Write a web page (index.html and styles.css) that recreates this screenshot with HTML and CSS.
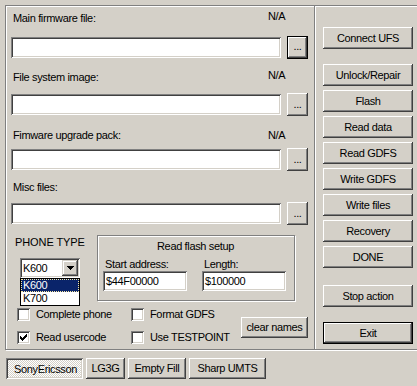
FILE: index.html
```html
<!DOCTYPE html>
<html>
<head>
<meta charset="utf-8">
<title>UFS</title>
<link rel="stylesheet" href="styles.css">
</head>
<body>
<div class="app">
  <div class="frame">
    <div class="left">
      <div class="lbl-row r1"><span class="lbl">Main firmware file:</span><span class="na up">N/A</span></div>
      <div class="in-row m1"><div class="edit path"></div><div class="btn dots default">...</div></div>

      <div class="lbl-row r2"><span class="lbl">File system image:</span><span class="na up">N/A</span></div>
      <div class="in-row m2"><div class="edit path"></div><div class="btn dots">...</div></div>

      <div class="lbl-row r3"><span class="lbl">Fimware upgrade pack:</span><span class="na">N/A</span></div>
      <div class="in-row m3"><div class="edit path"></div><div class="btn dots">...</div></div>

      <div class="lbl-row r4"><span class="lbl">Misc files:</span></div>
      <div class="in-row m4"><div class="edit path"></div><div class="btn dots">...</div></div>

      <div class="lower">
        <div class="phone">
          <div class="phone-title">PHONE TYPE</div>
          <div class="combo">
            <span class="combo-text">K600</span>
            <span class="combo-btn">
              <svg width="7" height="4" viewBox="0 0 7 4" shape-rendering="crispEdges"><rect x="0" y="0" width="7" height="1"/><rect x="1" y="1" width="5" height="1"/><rect x="2" y="2" width="3" height="1"/><rect x="3" y="3" width="1" height="1"/></svg>
            </span>
            <div class="droplist">
              <div class="item sel">K600</div>
              <div class="item">K700</div>
            </div>
          </div>
        </div>
        <div class="flashbox">
          <div class="flash-title">Read flash setup</div>
          <div class="flash-fields">
            <div class="field"><div class="field-lbl">Start address:</div><div class="edit small">$44F00000</div></div>
            <div class="field"><div class="field-lbl">Length:</div><div class="edit small">$100000</div></div>
          </div>
        </div>
      </div>

      <div class="options">
        <div class="checks">
          <div class="chk"><span class="box"></span><span>Complete phone</span></div>
          <div class="chk"><span class="box"></span><span>Format GDFS</span></div>
          <div class="chk"><span class="box"><svg width="13" height="13" viewBox="0 0 13 13" shape-rendering="crispEdges"><rect x="3" y="5" width="1" height="3"/><rect x="4" y="6" width="1" height="3"/><rect x="5" y="7" width="1" height="3"/><rect x="6" y="6" width="1" height="3"/><rect x="7" y="5" width="1" height="3"/><rect x="8" y="4" width="1" height="3"/><rect x="9" y="3" width="1" height="3"/></svg></span><span>Read usercode</span></div>
          <div class="chk"><span class="box"></span><span>Use TESTPOINT</span></div>
        </div>
        <div class="btn clear">clear names</div>
      </div>
    </div>

    <div class="right">
      <div class="btn rbtn">Connect UFS</div>
      <div class="rgroup">
        <div class="btn rbtn">Unlock/Repair</div>
        <div class="btn rbtn">Flash</div>
        <div class="btn rbtn">Read data</div>
        <div class="btn rbtn">Read GDFS</div>
        <div class="btn rbtn">Write GDFS</div>
        <div class="btn rbtn">Write files</div>
        <div class="btn rbtn">Recovery</div>
        <div class="btn rbtn">DONE</div>
      </div>
      <div class="btn rbtn stop">Stop action</div>
      <div class="btn rbtn default exit">Exit</div>
    </div>
  </div>

  <div class="tabs">
    <div class="btn tab down t-se">SonyEricsson</div>
    <div class="btn tab t-lg">LG3G</div>
    <div class="btn tab t-ef">Empty Fill</div>
    <div class="btn tab t-sh">Sharp UMTS</div>
  </div>
</div>
</body>
</html>
```

FILE: styles.css
```css
* { box-sizing: border-box; }
html, body { margin: 0; padding: 0; }
body {
  background: #d4d0c8;
  font-family: "Liberation Sans", Arial, sans-serif;
  font-size: 11px;
  line-height: 13px;
  letter-spacing: -0.35px;
  color: #000;
  width: 417px;
  height: 386px;
  overflow: hidden;
}
.app { padding: 5px 0 0 5px; }

/* etched frame */
.frame {
  display: flex;
  width: 420px;
  height: 345px;
  border: 1px solid #808080;
  border-right: none;
  box-shadow: inset 1px 1px #fff, 1px 1px #fff;
}
.left {
  flex: none;
  width: 309px;
  border-right: 1px solid #808080;
  box-shadow: 1px 0 #fff;
  display: flex;
  flex-direction: column;
}

/* generic button (Win classic) */
.btn {
  flex: none;
  display: flex;
  align-items: center;
  justify-content: center;
  background: #d4d0c8;
  box-shadow: inset -1px -1px #404040, inset 1px 1px #fff, inset -2px -2px #808080, inset 2px 2px #d4d0c8;
  white-space: nowrap;
  overflow: hidden;
}
.btn.default {
  border: 1px solid #000;
}

/* sunken edit */
.edit {
  background: #fff;
  box-shadow: inset 1px 1px #808080, inset -1px -1px #fff, inset 2px 2px #404040, inset -2px -2px #d4d0c8;
  padding: 0 3px;
  display: flex;
  align-items: center;
}

/* file rows */
.lbl-row { display: flex; padding-left: 7px; height: 13px; }
.lbl { width: 255px; }
.na.up { margin-top: -2px; }
.r1 { margin-top: 6px; }
.r2 { margin-top: 12px; }
.r3 { margin-top: 13px; }
.r4 { margin-top: 10px; }
.in-row { display: flex; align-items: center; height: 23px; padding-left: 5px; }
.m1 { margin-top: 11px; }
.m2 { margin-top: 9px; }
.m3 { margin-top: 6px; }
.m4 { margin-top: 8px; }
.edit.path { width: 270px; height: 21px; }
.dots { width: 21px; height: 23px; margin-left: 6px; align-items: flex-end; padding-bottom: 5px; }

/* lower area */
.lower { display: flex; align-items: flex-start; margin-top: 10px; }
.phone { width: 91px; padding-left: 9px; }
.phone-title { margin-top: 1px; letter-spacing: -0.1px; }
.combo {
  position: relative;
  margin: 9px 0 0 5px;
  width: 60px;
  height: 20px;
  background: #fff;
  box-shadow: inset 1px 1px #808080, inset -1px -1px #fff, inset 2px 2px #404040, inset -2px -2px #d4d0c8;
  display: flex;
  align-items: center;
  padding: 2px;
}
.combo-text { flex: 1; padding-left: 1px; }
.combo-btn {
  width: 16px;
  height: 16px;
  display: flex;
  align-items: center;
  justify-content: center;
  background: #d4d0c8;
  box-shadow: inset -1px -1px #404040, inset 1px 1px #d4d0c8, inset -2px -2px #808080, inset 2px 2px #fff;
}
.combo-btn svg { display: block; }
.droplist {
  position: absolute;
  left: 0;
  top: 100%;
  width: 60px;
  background: #fff;
  border: 1px solid #000;
}
.item { height: 13px; line-height: 13px; padding-left: 2px; }
.item.sel {
  background: #0a246a;
  color: #fff;
  outline: 1px dotted #f6e7a4;
  outline-offset: -1px;
}

.flashbox {
  width: 198px;
  height: 66px;
  border: 1px solid #808080;
  box-shadow: inset 1px 1px #fff, 1px 1px #fff;
  padding: 4px 0 0 5px;
}
.flash-title { text-align: center; padding-right: 6px; }
.flash-fields { display: flex; gap: 15px; margin-top: 5px; }
.field { width: 84px; }
.field-lbl { padding-left: 2px; }
.edit.small { width: 84px; height: 20px; margin-top: 0; }

/* options */
.options { display: flex; align-items: flex-start; margin-top: 7px; }
.checks {
  display: grid;
  grid-template-columns: 114px 110px;
  row-gap: 10px;
  padding-left: 11px;
}
.chk { display: flex; align-items: center; height: 13px; white-space: nowrap; }
.box {
  width: 13px;
  height: 13px;
  flex: none;
  margin-right: 6px;
  background: #fff;
  box-shadow: inset 1px 1px #808080, inset -1px -1px #fff, inset 2px 2px #404040, inset -2px -2px #d4d0c8;
}
.box svg { display: block; }
.clear { width: 67px; height: 21px; margin: 9px 0 0 0; }

/* right column */
.right {
  display: flex;
  flex-direction: column;
  padding: 21px 0 0 8px;
}
.rbtn { width: 90px; height: 22px; }
.rgroup { display: flex; flex-direction: column; gap: 4px; margin-top: 15px; }
.stop { margin-top: 17px; }
.exit { margin-top: 15px; }

/* bottom tabs */
.tabs { display: flex; gap: 3px; margin: 8px 0 0 1px; }
.tab { height: 21px; }
.t-se { width: 77px; }
.t-lg { width: 39px; }
.t-ef { width: 58px; }
.t-sh { width: 77px; }
.tab.down {
  background: repeating-conic-gradient(#fff 0 25%, #d4d0c8 0 50%) 0 0 / 2px 2px;
  box-shadow: inset 1px 1px #808080, inset -1px -1px #fff, inset 2px 2px #404040, inset -2px -2px #d4d0c8;
  padding-top: 2px;
  padding-left: 2px;
}
```
